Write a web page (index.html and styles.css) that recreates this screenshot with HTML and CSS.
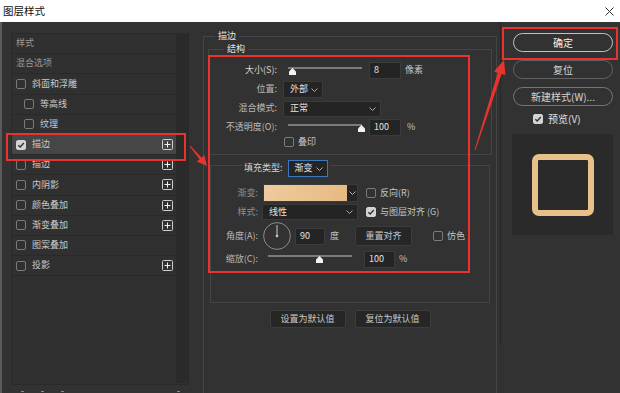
FILE: index.html
```html
<!DOCTYPE html>
<html lang="zh-CN">
<head>
    <meta charset="UTF-8">
    <meta name="viewport" content="width=device-width, initial-scale=1.0">
    <title>图层样式</title>
    <link rel="stylesheet" href="styles.css">
</head>
<body>
<div class="window">
    <div class="titlebar">
        <span>图层样式</span>
        <svg class="close" width="9" height="9" viewBox="0 0 9 9"><path d="M0.5 0.5 L8.5 8.5 M8.5 0.5 L0.5 8.5" stroke="#333" stroke-width="1"/></svg>
    </div>

    <div class="dialog">
        <!-- style list -->
        <div class="sidebar">
            <div class="list">
                <div class="rows">
                    <div class="row dim">样式</div>
                    <div class="row dim">混合选项</div>
                    <div class="row"><span class="cb"></span>斜面和浮雕</div>
                    <div class="row sub"><span class="cb"></span>等高线</div>
                    <div class="row sub"><span class="cb"></span>纹理</div>
                    <div class="row active">
                        <span class="cb on"><svg width="8" height="8" viewBox="0 0 8 8"><path d="M1.3 4.2 L3.2 6 L6.8 2" fill="none" stroke="#333" stroke-width="1.4"/></svg></span>描边
                        <svg class="plus" width="11" height="11" viewBox="0 0 11 11"><rect x="0.5" y="0.5" width="10" height="10" rx="1" fill="none" stroke="#cfcfcf"/><path d="M5.5 2.5 V8.5 M2.5 5.5 H8.5" stroke="#f0f0f0"/></svg>
                    </div>
                    <div class="row"><span class="cb"></span>描边
                        <svg class="plus" width="11" height="11" viewBox="0 0 11 11"><rect x="0.5" y="0.5" width="10" height="10" rx="1" fill="none" stroke="#cfcfcf"/><path d="M5.5 2.5 V8.5 M2.5 5.5 H8.5" stroke="#f0f0f0"/></svg>
                    </div>
                    <div class="row"><span class="cb"></span>内阴影
                        <svg class="plus" width="11" height="11" viewBox="0 0 11 11"><rect x="0.5" y="0.5" width="10" height="10" rx="1" fill="none" stroke="#cfcfcf"/><path d="M5.5 2.5 V8.5 M2.5 5.5 H8.5" stroke="#f0f0f0"/></svg>
                    </div>
                    <div class="row"><span class="cb"></span>颜色叠加
                        <svg class="plus" width="11" height="11" viewBox="0 0 11 11"><rect x="0.5" y="0.5" width="10" height="10" rx="1" fill="none" stroke="#cfcfcf"/><path d="M5.5 2.5 V8.5 M2.5 5.5 H8.5" stroke="#f0f0f0"/></svg>
                    </div>
                    <div class="row"><span class="cb"></span>渐变叠加
                        <svg class="plus" width="11" height="11" viewBox="0 0 11 11"><rect x="0.5" y="0.5" width="10" height="10" rx="1" fill="none" stroke="#cfcfcf"/><path d="M5.5 2.5 V8.5 M2.5 5.5 H8.5" stroke="#f0f0f0"/></svg>
                    </div>
                    <div class="row"><span class="cb"></span>图案叠加</div>
                    <div class="row"><span class="cb"></span>投影
                        <svg class="plus" width="11" height="11" viewBox="0 0 11 11"><rect x="0.5" y="0.5" width="10" height="10" rx="1" fill="none" stroke="#cfcfcf"/><path d="M5.5 2.5 V8.5 M2.5 5.5 H8.5" stroke="#f0f0f0"/></svg>
                    </div>
                </div>
                <div class="scrollbar"></div>
            </div>
            <div class="list-foot">
                <span class="foot-icon"></span>
                <span class="foot-icon"></span>
                <span class="foot-icon"></span>
                <span class="foot-icon last"></span>
            </div>
        </div>

        <!-- stroke settings -->
        <div class="main">
            <div class="group stroke-group">
                <div class="group-title">描边</div>

                <div class="group struct-group">
                    <div class="group-title">结构</div>
                    <div class="struct-rows">
                        <div class="frow">
                            <span class="lbl bright">大小(S):</span>
                            <div class="slider">
                                <div class="track"></div>
                                <svg class="thumb thumb-min" width="7" height="7" viewBox="0 0 7 7"><path d="M3.5 0 L7 3.5 V7 H0 V3.5 Z" fill="#f2f2f2"/></svg>
                            </div>
                            <span class="num">8</span>
                            <span class="unit">像素</span>
                        </div>
                        <div class="frow">
                            <span class="lbl">位置:</span>
                            <div class="select sel-pos">外部<svg width="7" height="4" viewBox="0 0 7 4"><path d="M0.5 0.5 L3.5 3.5 L6.5 0.5" fill="none" stroke="#aaa"/></svg></div>
                        </div>
                        <div class="frow">
                            <span class="lbl">混合模式:</span>
                            <div class="select sel-blend">正常<svg width="7" height="4" viewBox="0 0 7 4"><path d="M0.5 0.5 L3.5 3.5 L6.5 0.5" fill="none" stroke="#aaa"/></svg></div>
                        </div>
                        <div class="frow">
                            <span class="lbl">不透明度(O):</span>
                            <div class="slider">
                                <div class="track"></div>
                                <svg class="thumb thumb-max" width="7" height="7" viewBox="0 0 7 7"><path d="M3.5 0 L7 3.5 V7 H0 V3.5 Z" fill="#f2f2f2"/></svg>
                            </div>
                            <span class="num">100</span>
                            <span class="unit pct">%</span>
                        </div>
                        <div class="frow check-row">
                            <span class="check"><span class="cb"></span>叠印</span>
                        </div>
                    </div>
                </div>

                <div class="group fill-group">
                    <div class="fill-head">
                        <span class="bright">填充类型:</span>
                        <div class="select sel-fill">渐变<svg width="7" height="4" viewBox="0 0 7 4"><path d="M0.5 0.5 L3.5 3.5 L6.5 0.5" fill="none" stroke="#aaa"/></svg></div>
                    </div>
                    <div class="fill-rows">
                        <div class="frow fr-grad">
                            <span class="lbl dim">渐变:</span>
                            <div class="grad-pick">
                                <div class="swatch"></div>
                                <div class="grad-arrow"><svg width="7" height="4" viewBox="0 0 7 4"><path d="M0.5 0.5 L3.5 3.5 L6.5 0.5" fill="none" stroke="#aaa"/></svg></div>
                            </div>
                            <span class="check"><span class="cb"></span>反向(R)</span>
                        </div>
                        <div class="frow fr-style">
                            <span class="lbl dim">样式:</span>
                            <div class="select sel-style">线性<svg width="7" height="4" viewBox="0 0 7 4"><path d="M0.5 0.5 L3.5 3.5 L6.5 0.5" fill="none" stroke="#aaa"/></svg></div>
                            <span class="check"><span class="cb on"><svg width="8" height="8" viewBox="0 0 8 8"><path d="M1.3 4.2 L3.2 6 L6.8 2" fill="none" stroke="#333" stroke-width="1.4"/></svg></span>与图层对齐 (G)</span>
                        </div>
                        <div class="frow fr-angle">
                            <span class="lbl">角度(A):</span>
                            <svg class="dial" width="28" height="28" viewBox="0 0 28 28">
                                <circle cx="14" cy="14" r="13.4" fill="none" stroke="#8a8a8a" stroke-width="1"/>
                                <path d="M14 14 V3" stroke="#c8c8c8" stroke-width="1"/>
                                <circle cx="14" cy="14" r="1.3" fill="#c8c8c8"/>
                            </svg>
                            <span class="num num-angle">90</span>
                            <span class="unit">度</span>
                            <span class="btn btn-reset">重置对齐</span>
                            <span class="check check-dither"><span class="cb"></span>仿色</span>
                        </div>
                        <div class="frow fr-scale">
                            <span class="lbl">缩放(C):</span>
                            <div class="slider slider-scale">
                                <div class="track"></div>
                                <svg class="thumb thumb-mid" width="7" height="7" viewBox="0 0 7 7"><path d="M3.5 0 L7 3.5 V7 H0 V3.5 Z" fill="#f2f2f2"/></svg>
                            </div>
                            <span class="num num-scale">100</span>
                            <span class="unit">%</span>
                        </div>
                    </div>
                </div>

                <div class="defaults">
                    <span class="btn">设置为默认值</span>
                    <span class="btn">复位为默认值</span>
                </div>
            </div>
        </div>

        <div class="divider"></div>

        <!-- dialog buttons + preview -->
        <div class="side">
            <div class="side-btn primary">确定</div>
            <div class="side-btn">复位</div>
            <div class="side-btn mid">新建样式(W)...</div>
            <div class="preview-toggle"><span class="cb on"><svg width="8" height="8" viewBox="0 0 8 8"><path d="M1.3 4.2 L3.2 6 L6.8 2" fill="none" stroke="#333" stroke-width="1.4"/></svg></span>预览(V)</div>
            <div class="preview">
                <div class="preview-shape"></div>
            </div>
        </div>
    </div>

    <!-- red annotations -->
    <div class="mark mark-row"></div>
    <div class="mark mark-panel"></div>
    <div class="mark mark-ok"></div>
    <svg class="arrows" width="620" height="393" viewBox="0 0 620 393">
        <polygon points="189.6,146.3 199.6,159.2 196.7,161.6 207,166 204.3,155.2 201.4,157.6 190.4,145.7" fill="#e8332e"/>
        <polygon points="474.5,149.9 497.8,72.7 494.0,71.5 504,60 505.4,75.1 501.6,73.9 475.5,150.1" fill="#e8332e"/>
    </svg>
</div>
</body>
</html>
```

FILE: styles.css
```css
* {
    box-sizing: border-box;
}

body {
    margin: 0;
    width: 620px;
    height: 393px;
    overflow: hidden;
    background-color: #323232;
    color: #bdbdbd;
    font-family: "Noto Sans CJK SC", "Noto Sans", sans-serif;
    font-size: 9px;
    line-height: 1.2;
}

.window {
    position: relative;
    width: 620px;
    height: 393px;
    overflow: hidden;
}

.titlebar {
    height: 22px;
    background-color: #fff;
    color: #111;
    font-size: 10.5px;
    display: flex;
    align-items: center;
    justify-content: space-between;
    padding: 0 6px 0 3px;
}

.dialog {
    display: flex;
    height: 371px;
    border-left: 2px solid #5a5a5a;
}

/* left style list */
.sidebar {
    flex: none;
    width: 187px;
    padding: 11px 0 0 9px;
}

.list {
    display: flex;
    width: 178px;
    height: 352px;
    background-color: #303030;
    border: 1px solid #2a2a2a;
}

.rows {
    width: 164px;
}

.scrollbar {
    width: 12px;
    height: 349px;
    background-color: #2a2a2a;
}

.row {
    display: flex;
    align-items: center;
    gap: 6px;
    height: 20.2px;
    padding-left: 4px;
    border-bottom: 1px solid #292929;
    color: #c9c9c9;
}

.row.dim {
    color: #9a9a9a;
}

.row.sub {
    padding-left: 12px;
}

.row.active {
    background-color: #464646;
}

.plus {
    margin-left: auto;
    margin-right: 3px;
}

.cb {
    flex: none;
    width: 10px;
    height: 10px;
    border: 1px solid #7a7a7a;
    border-radius: 2px;
}

.cb.on {
    display: flex;
    align-items: center;
    justify-content: center;
    background-color: #d4d4d4;
    border-color: #d4d4d4;
}

.list-foot {
    display: flex;
    margin-top: 6px;
    padding-left: 10px;
    gap: 17px;
}

.foot-icon {
    width: 3px;
    height: 3px;
    border-top: 1px solid #8a8a8a;
}

.foot-icon.last {
    margin-left: auto;
    margin-right: 9px;
}

/* main settings */
.main {
    flex: none;
    width: 294px;
    margin-left: 14px;
    padding-top: 14px;
}

.group {
    border: 1px solid #454545;
}

.group-title {
    width: fit-content;
    margin-top: -8px;
    padding: 0 3px;
    line-height: 14px;
    background-color: #323232;
    color: #e4e4e4;
}

.stroke-group {
    height: 380px;
}

.stroke-group > .group-title {
    margin-left: 11px;
}

.struct-group {
    margin: 6px 4px 0;
    padding-bottom: 7px;
}

.struct-group > .group-title {
    margin-left: 15px;
}

.struct-rows {
    padding-top: 5px;
}

.frow {
    display: flex;
    align-items: center;
    height: 19px;
}

.lbl {
    flex: none;
    text-align: right;
    color: #b9b9b9;
}

.bright {
    color: #d2d2d2;
}

.lbl.dim {
    color: #8e8e8e;
}

.struct-group .lbl {
    width: 68px;
    margin-right: 6px;
}

.check-row {
    height: 10px;
    padding-left: 75px;
}

.slider {
    flex: none;
    width: 80px;
    height: 19px;
    padding-top: 6px;
}

.track {
    width: 74px;
    height: 2px;
    margin-left: 5px;
    background-color: #7a7a7a;
}

.thumb {
    display: block;
    margin-top: -1px;
}

.thumb-min {
    margin-left: 6px;
}

.thumb-max {
    margin-left: 75px;
}

.num {
    flex: none;
    display: flex;
    align-items: center;
    width: 32px;
    height: 17px;
    margin-left: 6px;
    padding-left: 4px;
    background-color: #242424;
    border: 1px solid #3b3b3b;
    color: #e2e2e2;
}

.unit {
    margin-left: 4px;
    color: #c4c4c4;
}

.unit.pct {
    margin-left: 6px;
}

.select {
    flex: none;
    display: flex;
    align-items: center;
    justify-content: space-between;
    height: 17px;
    padding: 0 4px 0 6px;
    background-color: #242424;
    border: 1px solid #3a3a3a;
    color: #e2e2e2;
}

.sel-pos {
    width: 40px;
}

.sel-blend {
    width: 98px;
    height: 16px;
}

.check {
    display: flex;
    align-items: center;
    gap: 4px;
    color: #c4c4c4;
}

/* fill section */
.fill-group {
    margin: 10px 6px 0;
    padding-bottom: 34px;
}

.fill-head {
    display: flex;
    align-items: center;
    gap: 5px;
    width: fit-content;
    margin: -6px 0 0 31px;
    padding: 0 2px;
    background-color: #323232;
}

.sel-fill {
    width: 40px;
    border-color: #3a78c2;
}

.fill-rows {
    padding-top: 6px;
}

.fill-group .lbl {
    width: 47px;
    margin-right: 4px;
}

.fr-grad {
    height: 20px;
}

.fr-style {
    height: 18px;
}

.fr-angle {
    height: 30px;
}

.fr-scale {
    height: 17px;
}

.grad-pick {
    flex: none;
    display: flex;
    width: 95px;
    height: 18px;
    margin-left: 1px;
    border: 1px solid #3a3a3a;
}

.swatch {
    flex: 1;
    background: linear-gradient(90deg, #efca9c, #e6bb83);
}

.grad-arrow {
    width: 10px;
    display: flex;
    align-items: center;
    justify-content: center;
    background-color: #242424;
}

.fr-grad .check,
.fr-style .check {
    margin-left: 8px;
}

.sel-style {
    width: 96px;
    height: 16px;
}

.dial {
    flex: none;
    margin-left: 1px;
}

.num-angle {
    width: 30px;
    margin-left: 4px;
}

.fr-angle .unit {
    margin-left: 5px;
}

.btn {
    display: flex;
    align-items: center;
    justify-content: center;
    background-color: #262626;
    border: 1px solid #3c3c3c;
    border-radius: 2px;
    color: #c8c8c8;
}

.btn-reset {
    width: 57px;
    height: 20px;
    margin-left: 16px;
}

.check-dither {
    margin-left: 21px;
}

.slider-scale {
    width: 92px;
    height: 17px;
    padding-top: 4px;
}

.slider-scale .track {
    width: 84px;
    margin-left: 6px;
}

.thumb-mid {
    margin-left: 54px;
}

.num-scale {
    width: 31px;
    margin-left: 10px;
}

.defaults {
    display: flex;
    justify-content: center;
    gap: 9px;
    margin-top: 7px;
}

.defaults .btn {
    width: 76px;
    height: 18px;
}

/* right column */
.divider {
    flex: none;
    width: 1px;
    height: 323px;
    margin-left: 3px;
    background-color: #272727;
}

.side {
    flex: none;
    width: 119px;
    padding: 11px 0 0 12px;
    font-size: 10px;
}

.side-btn {
    display: flex;
    align-items: center;
    justify-content: center;
    width: 100px;
    height: 19px;
    margin-bottom: 8px;
    border: 1px solid #626262;
    border-radius: 10px;
    color: #d6d6d6;
}

.side-btn.primary {
    border-color: #c2c2c2;
    color: #f2f2f2;
}

.side-btn.mid {
    border-color: #767676;
}

.preview-toggle {
    display: flex;
    align-items: center;
    gap: 5px;
    height: 10px;
    margin-left: 20px;
    color: #e0e0e0;
}

.preview {
    display: flex;
    align-items: center;
    justify-content: center;
    width: 101px;
    height: 101px;
    margin: 10px 0 0 -1px;
    background-color: #2a2a2a;
}

.preview-shape {
    width: 62px;
    height: 62px;
    border: 6px solid #e8c08a;
    border-radius: 7px;
}

/* annotation overlay */
.mark {
    position: absolute;
    border: 2px solid #e8332e;
}

.mark-row {
    left: 6px;
    top: 133px;
    width: 180px;
    height: 28px;
}

.mark-panel {
    left: 208px;
    top: 55px;
    width: 262px;
    height: 218px;
}

.mark-ok {
    left: 502px;
    top: 27px;
    width: 116px;
    height: 33px;
}

.arrows {
    position: absolute;
    left: 0;
    top: 0;
    pointer-events: none;
}
```
